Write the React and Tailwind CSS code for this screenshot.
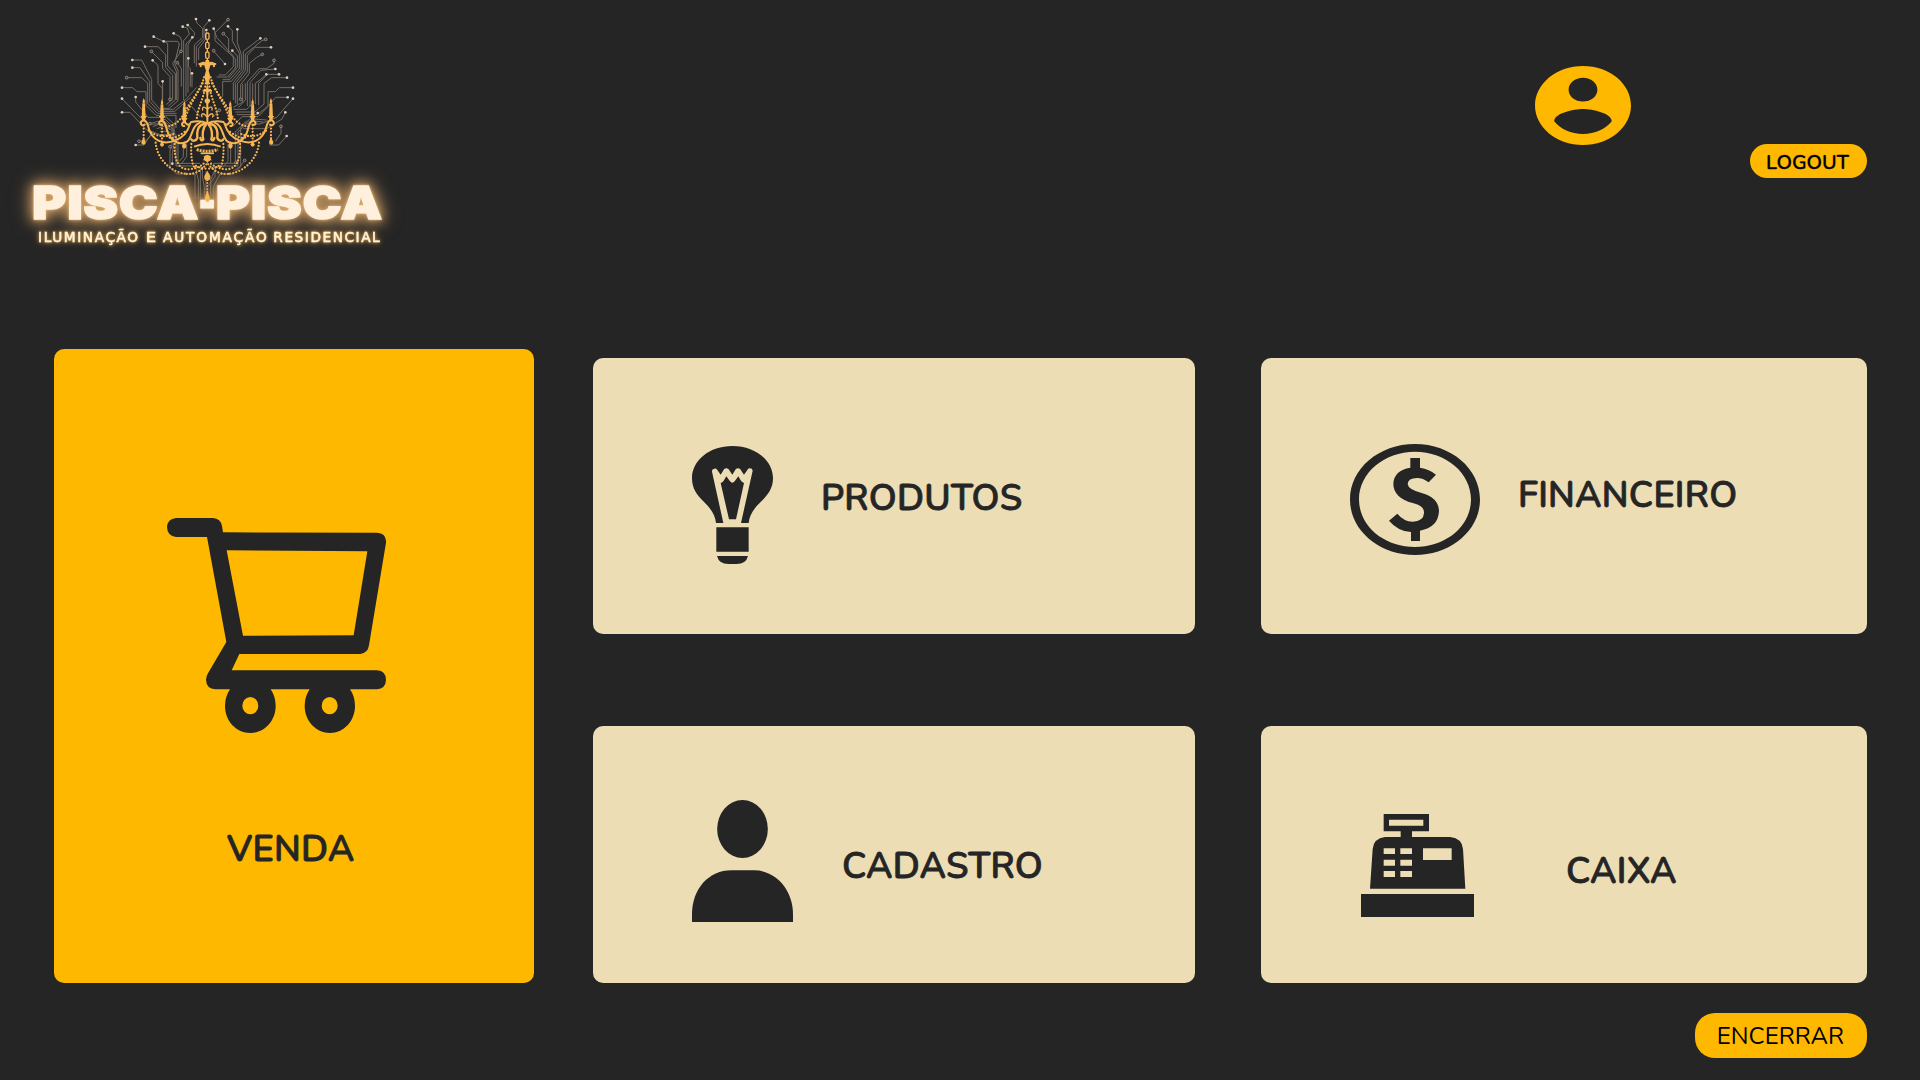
import React from "react";

const TRACES = [
  "588,57 590,68 608,86 608,112 583,135 583,190",
  "628,61 612,80 612,116 589,140 589,200",
  "619,90 618,116 596,145 596,180",
  "548,80 562,84 568,102 551,122 551,300",
  "563,75 583,98 583,106 558,132 558,290",
  "577,112 564,134 564,278",
  "521,100 540,110 545,122 545,150",
  "461,110 503,130 503,198 526,222 526,300 505,318",
  "491,124 533,124 538,132 524,190 534,212 534,302 508,325 490,325",
  "435,140 475,140 497,165 497,202 518,226 518,298 498,314",
  "454,154 488,188 488,206 510,230 510,298",
  "543,154 518,190 529,214 529,300",
  "532,188 544,206 544,260",
  "565,175 565,200 571,206 571,260",
  "576,220 576,262",
  "458,181 474,196 474,250 487,265 487,300",
  "488,244 488,300",
  "397,180 425,180 455,238 455,300 480,328 520,328 560,296 590,262",
  "397,203 420,203 449,245 449,304 476,334 524,334 572,292",
  "380,233 425,233 443,250 443,310 472,340 530,340",
  "366,263 398,263 411,275 438,275 438,316 468,346 528,346 528,384",
  "407,291 407,306 444,352 500,352 522,372 522,400",
  "366,296 440,372 490,372 510,390",
  "366,337 390,337 438,388 480,404 510,404",
  "407,435 432,435 452,405",
  "417,424 440,420 458,398",
  "450,371 496,358 516,378 516,440 510,450 510,502 530,522 585,522 585,597",
  "458,380 496,366 522,390 522,430 517,460 517,491",
  "470,386 500,376 528,404 528,498 590,498 590,520 595,540 595,597",
  "480,394 506,394 534,420 534,490 600,490",
  "550,430 550,470 538,484",
  "560,430 560,470 544,492",
  "684,59 645,98 645,122 706,176 706,204 682,231 650,231",
  "641,86 650,112 700,168 700,200 676,225 656,225",
  "670,101 686,116 686,156",
  "684,79 697,92 697,122 718,160 718,206 690,238 668,238",
  "712,88 712,128 724,164 724,208 694,244 668,244 668,290",
  "697,152 712,168 712,202 686,234",
  "675,192 640,152",
  "781,115 730,154 730,210 700,248 700,300",
  "797,118 786,122 736,162 736,212 706,250 706,310",
  "813,142 765,142 742,166 742,216 712,252 712,312",
  "787,163 770,172 748,190 748,220 722,254 722,296",
  "822,181 822,190 800,206 778,206 742,246 742,318",
  "826,207 782,211 750,248 750,320",
  "799,223 780,240 766,250 766,312",
  "837,223 802,223 776,250 776,316",
  "861,233 815,233 792,250 792,312 764,336 706,336",
  "879,263 838,263 826,275 804,275 804,318 772,344 710,344",
  "863,292 827,292 798,326 774,350 726,350 700,378",
  "879,296 830,352 780,372 740,372",
  "856,337 846,357 800,386 730,386",
  "843,379 843,400 826,424",
  "860,408 836,435 808,435",
  "758,250 758,310 740,328 700,328",
  "736,250 736,300 716,322",
  "728,252 728,306 700,322",
  "800,360 750,356 722,384 722,500 700,522 660,522 640,560 640,597",
  "790,366 750,362 714,396 714,498 650,498 632,540 632,597",
  "740,362 706,396 706,490 640,490",
  "684,430 684,484 670,500",
  "692,430 692,490",
  "734,481 720,500 700,512",
  "601,500 601,597",
  "607,500 607,530 613,560 613,597",
  "618,512 618,590",
  "645,500 645,530 626,556",
  "658,331 636,354",
  "574,318 600,350",
];

const SOLID_PADS = "588,57 628,61 619,90 548,80 563,75 577,112 521,100 461,110 491,124 435,140 565,175 576,220 458,181 488,244 397,180 397,203 366,263 407,291 366,296 366,337 407,435 517,491 641,86 684,79 712,88 697,152 675,192 781,115 813,142 826,207 799,223 837,223 861,233 879,263 863,292 879,296 856,337 860,408 773,339";
const RING_PADS = "380,233 417,424 454,154 543,154 532,188 510,298 684,59 670,101 641,152 797,118 787,163 822,181 722,298 843,379 734,481 708,487 658,331 510,440 450,371";

const points = (list) => list.split(" ").map((p) => p.split(","));

const HALF_BEADS = [
  "M612 232 C604 270 560 320 553 368",
  "M617 250 C612 300 592 320 590 362",
  "M608 250 C590 285 570 305 553 340 C540 362 524 380 490 380",
  "M431 376 V416",
  "M486 376 V430",
  "M467 428 C470 470 505 516 560 522",
  "M524 432 C522 480 535 508 565 508 C590 506 600 500 612 490",
  "M574 432 C572 465 576 490 582 500",
  "M446 392 C470 412 500 412 520 402",
  "M500 408 C520 425 545 400 560 392",
  "M560 522 C590 524 606 508 620 492",
  "M588 498 C600 504 612 506 622 506",
];

function Candle({ x, top, base }) {
  return (
    <g>
      <path d={`M${x} ${top} q-5 10 -3 16 h6 q3 -6 -3 -16z`} />
      <path d={`M${x - 4} ${top + 16} h8 l2 ${base - top - 26} h-12z`} />
      <path d={`M${x - 10} ${base - 16} h20 l-5 7 v8 h-10 v-8z`} />
    </g>
  );
}

function HalfChandelier() {
  return (
    <g>
      <g fill="#f8b553">
        <Candle x={431} top={294} base={364} />
        <Candle x={486} top={297} base={364} />
        <Candle x={553} top={303} base={370} />
        <path d="M431 412 l6 14 q0 8 -6 8 q-7 0 -7 -8z" />
        <path d="M486 424 l6 9 q0 7 -6 7 q-6 0 -6 -7z" />
        <path d="M553 424 l6 12 q0 10 -6 10 q-7 0 -7 -10z" />
      </g>
      <g fill="none" stroke="#f8b553" strokeLinecap="round">
        <path strokeWidth="6" d="M434 374 C424 380 418 368 427 362 C439 358 442 370 446 384 C456 420 488 436 524 422 C550 412 562 398 570 372" />
        <path strokeWidth="6" d="M486 374 C476 378 474 364 484 363 C496 362 497 378 502 394 C512 424 540 438 562 424 C578 412 574 376 600 368" />
        <path strokeWidth="6" d="M553 378 C545 380 543 368 552 367 C562 367 560 384 574 366 Q600 360 622 370" />
        <path strokeWidth="7" d="M614 372 C592 374 590 398 592 414 C588 424 578 424 574 418" />
        <path strokeWidth="7" d="M618 374 C608 384 606 404 610 418 C606 424 602 420 601 414" />
        <path strokeWidth="4" d="M620 326 C610 316 606 324 608 330 M620 350 C608 334 602 344 606 350" />
        <path strokeWidth="6" d="M616 190 C608 184 604 192 598 192 M602 192 V199" />
        {HALF_BEADS.map((d) => (
          <path key={d} d={d} strokeWidth="6.8" strokeDasharray="0 9.8" />
        ))}
      </g>
    </g>
  );
}

function LogoArt() {
  return (
    <svg className="block h-[260px] w-[420px]" viewBox="0 0 1260 780" role="img" aria-label="Pisca-Pisca">
      <g fill="none" stroke="#7b7268" strokeWidth="2.8">
        {TRACES.map((t) => (
          <polyline key={t} points={t} />
        ))}
      </g>
      {points(SOLID_PADS).map(([x, y]) => (
        <circle key={x + y} cx={x} cy={y} r="4" fill="#dccfbe" />
      ))}
      {points(RING_PADS).map(([x, y]) => (
        <circle key={x + y} cx={x} cy={y} r="4.2" fill="#403c37" stroke="#a3998d" strokeWidth="2.2" />
      ))}
      <HalfChandelier />
      <g transform="translate(1244 0) scale(-1 1)">
        <HalfChandelier />
      </g>
      <g fill="none" stroke="#f8b553" strokeWidth="4">
        <rect x="617" y="99" width="10" height="19" rx="4" />
        <path d="M622 118 V128 M622 146 V156 M622 174 V184" />
        <rect x="617" y="127" width="10" height="19" rx="4" />
        <rect x="617" y="156" width="10" height="19" rx="4" />
        <path d="M582 440 Q622 424 662 440" strokeWidth="6" />
        <path d="M590 449 Q622 458 654 449" strokeWidth="9" strokeDasharray="6 3" />
        <path d="M602 460 H642" strokeWidth="5" />
        <path d="M622 540 V580" strokeWidth="6" strokeLinecap="round" strokeDasharray="0 9" />
      </g>
      <g fill="#f8b553">
        <path d="M617 180 h10 l2 10 h16 v6 h-14 l-4 14 h-10 l-4 -14 h-14 v-6 h16z" />
        <path d="M619 208 h6 l6 22 -6 24 h-6 l-6 -24z" />
        <path d="M620 256 h4 l2 12 10 2 v5 h-10 l-2 20 6 4 v6 l-5 6 v60 h-6 v-60 l-5 -6 v-6 l6 -4 -2 -20 h-10 v-5 l10 -2z" />
        <circle cx="622" cy="475" r="10" />
        <path d="M622 464 l4 8 8 -5 -4 8 6 6 -9 0 -5 9 -5 -9 -9 0 6 -6 -4 -8 8 5z" />
        <path d="M622 512 l9 16 q2 14 -9 14 q-11 0 -9 -14z" />
      </g>
      <g
        className="font-['Inter'] font-black [filter:drop-shadow(0_0_5px_#e8b878)_drop-shadow(0_0_18px_#c99a62)_drop-shadow(0_0_26px_#a07c52)]"
        fill="#fff0de"
        stroke="#fff0de"
        strokeWidth="5"
      >
        <g className="text-[137px] tracking-[3px]">
          <text x="97" y="657" textLength="501" lengthAdjust="spacingAndGlyphs">PISCA</text>
          <text x="648" y="657" textLength="501" lengthAdjust="spacingAndGlyphs">PISCA</text>
        </g>
        <text x="600" y="652" textLength="43" lengthAdjust="spacingAndGlyphs" className="font-['Liberation_Sans'] text-[142px] font-bold" strokeWidth="9">-</text>
      </g>
      <path fill="#f8b553" d="M622 570 l7 22 q1 14 -7 14 q-8 0 -7 -14z" />
      <g
        className="font-['DejaVu_Sans'] text-[41px] [filter:drop-shadow(0_0_5px_#d89c3c)_drop-shadow(0_0_9px_#8a6a3c)]"
        fill="#fff3dc"
        stroke="#fff3dc"
        strokeWidth="1.8"
      >
        <text x="114" y="726" textLength="300">ILUMINAÇÃO</text>
        <text x="437" y="726" textLength="31" lengthAdjust="spacingAndGlyphs">E</text>
        <text x="489" y="726" textLength="311">AUTOMAÇÃO</text>
        <text x="820" y="726" textLength="319">RESIDENCIAL</text>
      </g>
    </svg>
  );
}

function AccountIcon() {
  return (
    <svg className="block h-[79px] w-24" viewBox="2 2 20 20" preserveAspectRatio="none" fill="#ffb800">
      <path d="M12 2C6.48 2 2 6.48 2 12s4.48 10 10 10 10-4.48 10-10S17.52 2 12 2zm0 3c1.66 0 3 1.34 3 3s-1.34 3-3 3-3-1.34-3-3 1.34-3 3-3zm0 14.2c-2.5 0-4.71-1.28-6-3.22.03-1.99 4-3.08 6-3.08 1.99 0 5.97 1.09 6 3.08-1.29 1.94-3.5 3.22-6 3.22z" />
    </svg>
  );
}

function CartIcon() {
  return (
    <svg className="block h-[215px] w-[219px]" viewBox="81 84 657 645" preserveAspectRatio="none" fill="#252525" fillRule="evenodd">
      <path d="M108 84H219Q242 86 246 108L249 127L712 128Q740 131 738 158L687 466Q684 489 661 492H298L275 541H711Q738 543 738 570Q737 596 711 598H630Q645 620 645 648C645 693 611 729 570 729S494 693 494 648Q494 620 509 598H392Q407 620 407 648C407 693 373 729 331 729S255 693 255 648Q255 620 270 598H226Q199 596 198 569Q198 560 204 550L259 456L201 141H108Q82 138 81 112Q82 87 108 84ZM260 181L309 437L641 436L682 184ZM331 621A24 26 0 1 0 331 673A24 26 0 1 0 331 621ZM569 621A24 26 0 1 0 569 673A24 26 0 1 0 569 621Z" />
    </svg>
  );
}

function BulbIcon() {
  return (
    <svg className="block h-[118px] w-[81px]" viewBox="96 78 243 354" fill="#252525">
      <path d="M217 78C286 78 339 121 339 175C339 205 324 224 304 244C283 264 268 284 266 309H243L278 152Q277 144 268 145Q264 146 262 150L252 164L241 148Q234 141 227 148L217 164L206 148Q199 141 192 148L182 164L172 150Q169 145 163 146Q155 147 156 155L190 309H168C166 284 151 264 130 244C110 224 96 205 96 175C96 121 149 78 217 78Z" />
      <path d="M182 189Q189 187 192 181L199 169L210 184Q217 192 224 184L235 169L242 181Q246 187 252 189L228 298H207Z" />
      <path d="M169 322H266V395H169ZM171 408H264Q258 432 230 432H205Q177 432 171 408Z" />
    </svg>
  );
}

function CoinIcon() {
  return (
    <svg className="block h-[111px] w-[130px]" viewBox="90 72 390 333">
      <path fill="#252525" fillRule="evenodd" d="M285 72C393 72 480 146 480 238.500S393 405 285 405S90 331 90 238.500S177 72 285 72ZM285 95C192 95 117 159 117 238.500S192 381 285 381S453 318 453 238.500S378 95 285 95Z" />
      <path fill="#252525" d="M271 114H300V143Q328 147 348 164L326 187Q309 174 291 174Q264 174 263 192Q264 208 305 219Q357 234 357 274Q354 323 300 332V363H273V336Q234 334 207 302L232 281Q251 304 278 305Q311 304 312 279Q314 259 281 250Q220 234 220 191Q222 151 271 143Z" />
    </svg>
  );
}

function PersonIcon() {
  return (
    <svg className="block h-[122px] w-[101px]" viewBox="66 60 303 366" fill="#252525">
      <ellipse cx="217.500" cy="147" rx="76" ry="87" />
      <path d="M66 426V403C66 326 117 271 184 271H253C318 271 369 330 369 403V426Z" />
    </svg>
  );
}

function RegisterIcon() {
  return (
    <svg className="block h-[103px] w-[113px]" viewBox="63 72 339 309" fill="#252525" fillRule="evenodd">
      <path d="M131 72H267V124H216V141H331Q366 145 369 177L376 296H90L98 177Q101 145 135 141H182V124H131ZM147 89V107H250V89ZM131 175V192H165V175ZM181 175V192H216V175ZM131 209V227H165V209ZM181 209V227H216V209ZM131 243V261H165V243ZM181 243V261H216V243ZM249 175V210H335V175Z" />
      <path d="M63 312H402V381H63Z" />
    </svg>
  );
}

const label = "block whitespace-nowrap font-['Nunito','Lato',sans-serif] text-[36px] leading-[36px] font-semibold tracking-[0.25px] text-[#252525] [-webkit-text-stroke:0.8px_#252525]";
const tile = "flex items-start rounded-[10px] bg-[#ecddb5]";

export default function App() {
  return (
    <div className="flex h-[1080px] w-[1920px] flex-col overflow-hidden bg-[#252525]">
      <header className="flex h-[349px] items-start">
        <LogoArt />
        <div className="ml-[1115px] mt-[66px]">
          <AccountIcon />
        </div>
        <button className="ml-[119px] mt-36 flex h-[34px] w-[117px] items-center justify-center rounded-full bg-[#ffb800] pr-[2px] pt-[3px] font-['Nunito','Lato',sans-serif] text-[20px] font-semibold leading-none text-black [-webkit-text-stroke:0.3px_#000]">
          LOGOUT
        </button>
      </header>

      <main className="flex h-[634px] items-stretch pl-[54px]">
        <section className="flex w-[480px] flex-col items-start rounded-[10px] bg-[#ffb800]">
          <div className="ml-[113px] mt-[169px]">
            <CartIcon />
          </div>
          <span className={label + " ml-[173px] mt-[99px]"}>VENDA</span>
        </section>

        <div className="ml-[59px] mt-[9px] grid grid-cols-[602px_606px] grid-rows-[276px_257px] gap-x-[66px] gap-y-[92px]">
          <section className={tile}>
            <div className="ml-[99px] mt-[88px]"><BulbIcon /></div>
            <span className={label + " ml-[48px] mt-[123px]"}>PRODUTOS</span>
          </section>
          <section className={tile}>
            <div className="ml-[89px] mt-[86px]"><CoinIcon /></div>
            <span className={label + " ml-[38px] mt-[120px]"}>FINANCEIRO</span>
          </section>
          <section className={tile}>
            <div className="ml-[99px] mt-[74px]"><PersonIcon /></div>
            <span className={label + " ml-[49px] mt-[123px]"}>CADASTRO</span>
          </section>
          <section className={tile}>
            <div className="ml-[100px] mt-[88px]"><RegisterIcon /></div>
            <span className={label + " ml-[92px] mt-[128px]"}>CAIXA</span>
          </section>
        </div>
      </main>

      <footer className="mt-[30px] flex justify-end pr-[53px]">
        <button className="flex h-[45px] w-[172px] items-center justify-center rounded-[20px] bg-[#ffb800] pr-px font-['Nunito','Lato',sans-serif] text-[24px] leading-none text-black">
          ENCERRAR
        </button>
      </footer>
    </div>
  );
}
